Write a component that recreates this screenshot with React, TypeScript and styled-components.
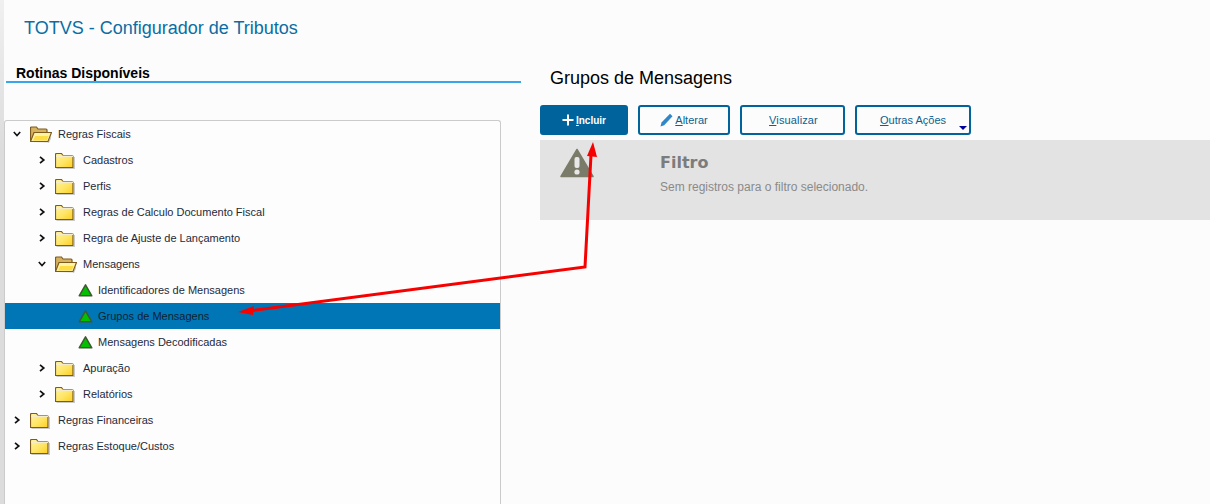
import React from "react";
import styled, { createGlobalStyle } from "styled-components";

const Global = createGlobalStyle`
  html, body { margin: 0; padding: 0; height: 100%; background: #fcfcfc; overflow: hidden; }
  body { font-family: "Liberation Sans", Arial, sans-serif; }
`;

const Page = styled.div`
  position: relative;
  width: 1210px;
  height: 504px;
  overflow: hidden;
  display: flex;
  flex-direction: column;
  background: #fcfcfc;
`;
const Header = styled.header`
  height: 57px;
  padding: 17px 0 0 24px;
  box-sizing: border-box;
  flex: none;
`;
const AppTitle = styled.h1`
  margin: 0;
  font-size: 18px;
  line-height: 22px;
  font-weight: 400;
  color: #0b6da3;
`;
const Main = styled.main`
  flex: 1;
  min-height: 0;
  display: flex;
`;
const Sidebar = styled.aside`
  width: 540px;
  flex: none;
  display: flex;
  flex-direction: column;
  padding-left: 4px;
  box-sizing: border-box;
`;
const SideHeading = styled.h2`
  margin: 0 19px 0 2px;
  height: 26px;
  padding: 8px 0 0 10px;
  box-sizing: border-box;
  font-size: 14px;
  line-height: 16px;
  font-weight: 700;
  color: #000;
  border-bottom: 2px solid #3aa6ea;
`;
const TreePanel = styled.div`
  margin-top: 37px;
  width: 497px;
  flex: 1;
  box-sizing: border-box;
  border: 1px solid #cbcbcb;
  border-bottom: 0;
  border-radius: 3px 3px 0 0;
  background: #fdfdfd;
`;
const Row = styled.div<{ $indent: number; $selected?: boolean }>`
  height: 26px;
  display: flex;
  align-items: center;
  padding-left: ${(p) => p.$indent}px;
  background: ${(p) => (p.$selected ? "#0076b6" : "transparent")};
`;
const Chevron = styled.svg`
  width: 8px;
  height: 8px;
  flex: none;
  margin-right: 9px;
`;
const FolderIcon = styled.svg`
  width: 22px;
  height: 18px;
  flex: none;
  margin-right: 6px;
`;
const LeafIcon = styled.svg`
  width: 16px;
  height: 15px;
  flex: none;
  margin-right: 4px;
  margin-left: 3px;
`;
const RowLabel = styled.span<{ $selected?: boolean }>`
  font-size: 11px;
  line-height: 14px;
  color: ${(p) => (p.$selected ? "#0c1f33" : "#1f2a3a")};
  white-space: nowrap;
`;
const Content = styled.section`
  flex: 1;
  min-width: 0;
  display: flex;
  flex-direction: column;
`;
const PageTitle = styled.h2`
  margin: 0;
  height: 48px;
  padding: 11px 0 0 10px;
  box-sizing: border-box;
  font-size: 18px;
  line-height: 20px;
  font-weight: 400;
  color: #000;
`;
const Toolbar = styled.div`
  display: flex;
  gap: 10px;
  height: 30px;
`;
const ActionButton = styled.button<{ $primary?: boolean; $w: number }>`
  position: relative;
  width: ${(p) => p.$w}px;
  height: 30px;
  box-sizing: border-box;
  border: 2px solid #00639c;
  border-radius: 3px;
  background: ${(p) => (p.$primary ? "#00639c" : "#fcfcfc")};
  color: ${(p) => (p.$primary ? "#fff" : "#0b5f92")};
  font-family: inherit;
  font-size: ${(p) => (p.$primary ? 10 : 11)}px;
  font-weight: ${(p) => (p.$primary ? 700 : 400)};
  display: flex;
  align-items: center;
  justify-content: center;
  gap: 2px;
  padding: 0;
  u { text-decoration: underline; }
`;
const Caret = styled.span`
  position: absolute;
  right: 2px;
  bottom: 3px;
  width: 0;
  height: 0;
  border-left: 4px solid transparent;
  border-right: 4px solid transparent;
  border-top: 4px solid #00009c;
`;
const VisualizarLabel = styled.span`
  letter-spacing: 0.012em;
  padding-left: 2px;
`;
const FilterPanel = styled.div`
  margin-top: 5px;
  height: 80px;
  background: #e3e3e3;
  display: flex;
`;
const WarnIcon = styled.svg`
  width: 34px;
  height: 30px;
  margin: 8px 0 0 20px;
  flex: none;
`;
const FilterBody = styled.div`
  margin-left: 66px;
  padding-top: 13px;
`;
const FilterTitle = styled.div`
  font-family: "DejaVu Sans", sans-serif;
  font-size: 16px;
  line-height: 20px;
  font-weight: 700;
  color: #7c7c7c;
`;
const FilterText = styled.div`
  margin-top: 7px;
  font-size: 12px;
  line-height: 14px;
  color: #8a8a8a;
`;
const Annotation = styled.svg`
  position: absolute;
  left: 0;
  top: 0;
  width: 1210px;
  height: 504px;
  pointer-events: none;
`;
const LeftEdge = styled.div`
  position: absolute;
  left: 0;
  top: 0;
  width: 4px;
  height: 504px;
  background: linear-gradient(to bottom, #f0f0f0, #dcdcdc 30%);
`;

const ChevronRight = () => (
  <Chevron viewBox="0 0 8 8"><path d="M2 .8 5.800 4 2 7.200" fill="none" stroke="#111" strokeWidth="1.700" /></Chevron>
);
const ChevronDown = () => (
  <Chevron viewBox="0 0 8 8"><path d="M.8 2 4 5.600 7.200 2" fill="none" stroke="#111" strokeWidth="1.600" /></Chevron>
);
const ClosedFolder = () => (
  <FolderIcon viewBox="0 0 22 18">
    <defs>
      <linearGradient id="fc" x1="0" y1="0" x2="1" y2="1">
        <stop offset="0" stopColor="#fff6a0" /><stop offset=".55" stopColor="#ffe566" /><stop offset="1" stopColor="#fccf1e" />
      </linearGradient>
    </defs>
    <path d="M1 17h18V6h1v12H2z" fill="#a8a8a8" opacity=".6" />
    <path d="M.5 16.500V3.500q0-1 1-1h5l1.500 2h9q1 0 1 1v11z" fill="url(#fc)" stroke="#7d5a1e" strokeWidth="1.200" />
    <path d="M1 5.300h17" stroke="#f6edc8" strokeWidth="1.400" />
  </FolderIcon>
);
const OpenFolder = () => (
  <FolderIcon viewBox="0 0 22 18">
    <path d="M2 17.500h16l3-7v3l-2 4.500z" fill="#a8a8a8" opacity=".6" />
    <path d="M.5 16.500V3q0-1 1-1h5l1.500 2h8q1 0 1 1v2.500" fill="#d6b25e" stroke="#7d5a1e" strokeWidth="1.200" />
    <path d="M.5 16.500 4 7.500h17.500l-3.500 9z" fill="#fff3a8" stroke="#7d5a1e" strokeWidth="1.200" />
    <path d="M3 15.500 5.200 11H18.500l-1.800 4.500z" fill="#fddc44" />
  </FolderIcon>
);
const Leaf = () => (
  <LeafIcon viewBox="0 0 16 15">
    <path d="M7.500 1.800 13.800 12.800H1.200z" fill="#00c000" stroke="#3f5a30" strokeWidth="1.500" strokeLinejoin="round" />
  </LeafIcon>
);

type Item = { label: string; indent: number; kind: "closed" | "open" | "leaf"; selected?: boolean };
const items: Item[] = [
  { label: "Regras Fiscais", indent: 8, kind: "open" },
  { label: "Cadastros", indent: 33, kind: "closed" },
  { label: "Perfis", indent: 33, kind: "closed" },
  { label: "Regras de Calculo Documento Fiscal", indent: 33, kind: "closed" },
  { label: "Regra de Ajuste de Lançamento", indent: 33, kind: "closed" },
  { label: "Mensagens", indent: 33, kind: "open" },
  { label: "Identificadores de Mensagens", indent: 70, kind: "leaf" },
  { label: "Grupos de Mensagens", indent: 70, kind: "leaf", selected: true },
  { label: "Mensagens Decodificadas", indent: 70, kind: "leaf" },
  { label: "Apuração", indent: 33, kind: "closed" },
  { label: "Relatórios", indent: 33, kind: "closed" },
  { label: "Regras Financeiras", indent: 8, kind: "closed" },
  { label: "Regras Estoque/Custos", indent: 8, kind: "closed" },
];

export default function App() {
  return (
    <Page>
      <Global />
      <LeftEdge />
      <Header><AppTitle>TOTVS - Configurador de Tributos</AppTitle></Header>
      <Main>
        <Sidebar>
          <SideHeading>Rotinas Disponíveis</SideHeading>
          <TreePanel>
            {items.map((it) => (
              <Row key={it.label} $indent={it.indent} $selected={it.selected}>
                {it.kind === "leaf" ? <Leaf /> : it.kind === "open" ? <><ChevronDown /><OpenFolder /></> : <><ChevronRight /><ClosedFolder /></>}
                <RowLabel $selected={it.selected}>{it.label}</RowLabel>
              </Row>
            ))}
          </TreePanel>
        </Sidebar>
        <Content>
          <PageTitle>Grupos de Mensagens</PageTitle>
          <Toolbar>
            <ActionButton $primary $w={88}>
              <svg width="12" height="12" viewBox="0 0 12 12"><path d="M6 .5v11M.5 6h11" stroke="#fff" strokeWidth="2" /></svg>
              <span><u>I</u>ncluir</span>
            </ActionButton>
            <ActionButton $w={92}>
              <svg width="13" height="14" viewBox="0 0 13 14"><path d="M.5 13.500l1-4L10 .8l2.500 2.400-8.300 9z" fill="#2f86c8" /></svg>
              <span><u>A</u>lterar</span>
            </ActionButton>
            <ActionButton $w={105}><VisualizarLabel><u>V</u>isualizar</VisualizarLabel></ActionButton>
            <ActionButton $w={116}><span><u>O</u>utras Ações</span><Caret /></ActionButton>
          </Toolbar>
          <FilterPanel>
            <WarnIcon viewBox="0 0 34 30">
              <path d="M17 1.500 33 28.500H1z" fill="#7b7b6a" stroke="#7b7b6a" strokeWidth="1.500" strokeLinejoin="round" />
              <rect x="14.500" y="9" width="5" height="11" rx="2" fill="#e8e8e8" />
              <circle cx="17" cy="24" r="2.600" fill="#e8e8e8" />
            </WarnIcon>
            <FilterBody>
              <FilterTitle>Filtro</FilterTitle>
              <FilterText>Sem registros para o filtro selecionado.</FilterText>
            </FilterBody>
          </FilterPanel>
        </Content>
      </Main>
      <Annotation viewBox="0 0 1210 504">
        <path d="M252 310.500 585 267 591 155" fill="none" stroke="#f70000" strokeWidth="3" />
        <path d="M238 312 254 306 253 315z" fill="#f70000" />
        <path d="M593 142 597 157 587 156z" fill="#f70000" />
      </Annotation>
    </Page>
  );
}
